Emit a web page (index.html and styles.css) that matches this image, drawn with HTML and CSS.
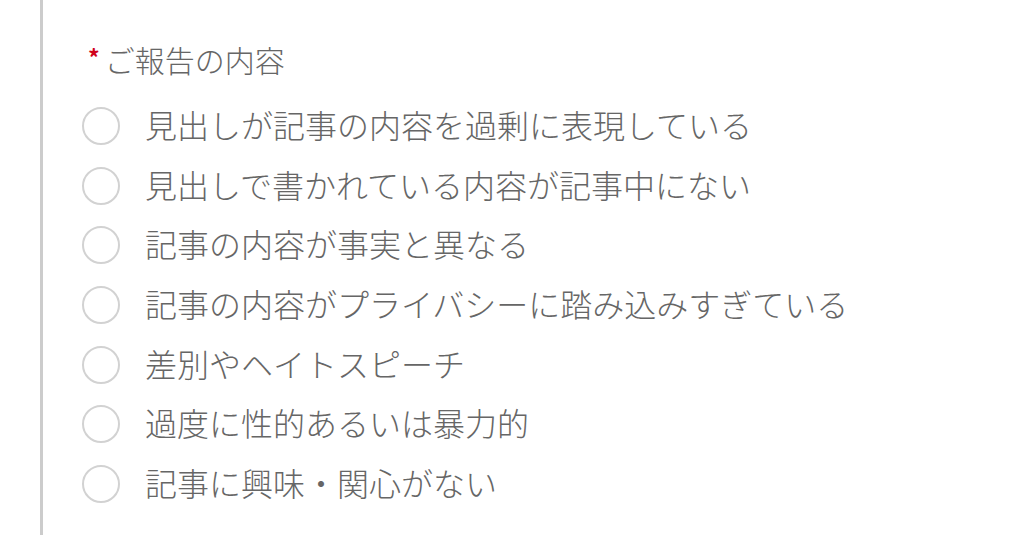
FILE: index.html
```html
<!DOCTYPE html>
<html lang="ja">
<head>
<meta charset="utf-8">
<link rel="stylesheet" href="styles.css">
</head>
<body>
<div class="panel">
  <div class="label"><span class="req">*</span><span class="label-text">ご報告の内容</span></div>
  <ul class="options">
    <li class="option"><span class="radio"></span><span class="text">見出しが記事の内容を過剰に表現している</span></li>
    <li class="option"><span class="radio"></span><span class="text">見出しで書かれている内容が記事中にない</span></li>
    <li class="option"><span class="radio"></span><span class="text">記事の内容が事実と異なる</span></li>
    <li class="option"><span class="radio"></span><span class="text">記事の内容がプライバシーに踏み込みすぎている</span></li>
    <li class="option"><span class="radio"></span><span class="text">差別やヘイトスピーチ</span></li>
    <li class="option"><span class="radio"></span><span class="text">過度に性的あるいは暴力的</span></li>
    <li class="option"><span class="radio"></span><span class="text">記事に興味・関心がない</span></li>
  </ul>
</div>
</body>
</html>
```
FILE: styles.css
```css
html, body {
  margin: 0;
  padding: 0;
  background: #ffffff;
}
body {
  width: 1024px;
  height: 535px;
  overflow: hidden;
  font-family: "Noto Sans CJK JP", "Noto Sans", sans-serif;
  color: #666666;
}
.panel {
  margin-left: 40px;
  border-left: 3px solid #cccccc;
  height: 535px;
  box-sizing: border-box;
  padding: 40px 0 0 39px;
}
.label {
  display: flex;
  align-items: flex-start;
  margin-left: 6px;
  height: 38px;
}
.req {
  color: #d0021b;
  font-size: 23px;
  line-height: 23px;
  margin-top: 6px;
  margin-right: 5px;
  font-weight: 700;
}
.label-text {
  font-size: 30px;
  line-height: 38px;
  font-weight: 300;
  color: #666666;
}
.options {
  list-style: none;
  margin: 29px 0 0 0;
  padding: 0;
  display: flex;
  flex-direction: column;
  gap: 21.7px;
}
.option {
  display: flex;
  align-items: center;
  height: 38px;
}
.radio {
  width: 38px;
  height: 38px;
  box-sizing: border-box;
  border: 2px solid #d2d2d2;
  border-radius: 50%;
  flex: none;
}
.text {
  margin-left: 25px;
  font-size: 32px;
  line-height: 38px;
  font-weight: 300;
  white-space: nowrap;
  position: relative;
  top: -2px;
}
```
